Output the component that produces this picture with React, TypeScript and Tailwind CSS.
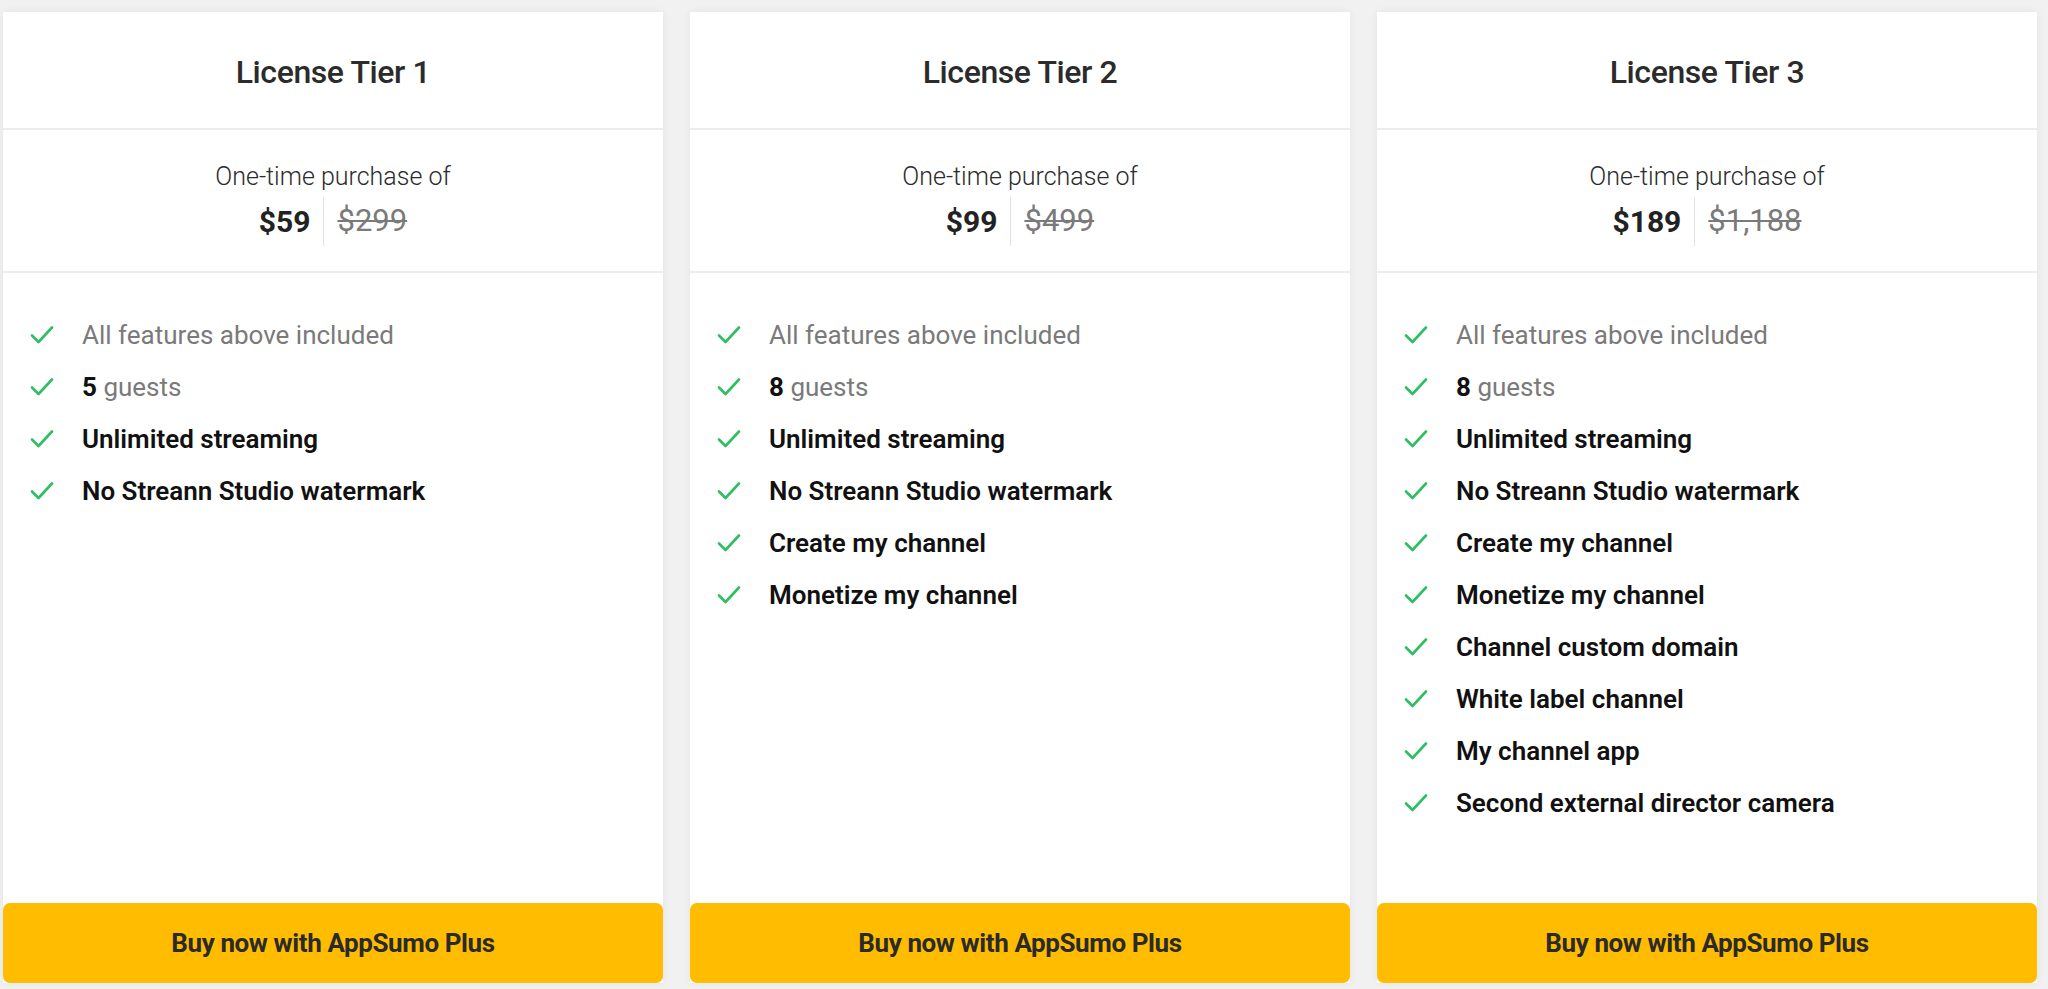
import React from 'react';

interface Feature {
  text: string;
  strong?: string;
  muted?: boolean;
}

interface Tier {
  name: string;
  price: string;
  oldPrice: string;
  features: Feature[];
}

const base: Feature[] = [
  { text: 'All features above included', muted: true },
];

const tiers: Tier[] = [
  {
    name: 'License Tier 1',
    price: '$59',
    oldPrice: '$299',
    features: [
      ...base,
      { strong: '5', text: 'guests', muted: true },
      { text: 'Unlimited streaming' },
      { text: 'No Streann Studio watermark' },
    ],
  },
  {
    name: 'License Tier 2',
    price: '$99',
    oldPrice: '$499',
    features: [
      ...base,
      { strong: '8', text: 'guests', muted: true },
      { text: 'Unlimited streaming' },
      { text: 'No Streann Studio watermark' },
      { text: 'Create my channel' },
      { text: 'Monetize my channel' },
    ],
  },
  {
    name: 'License Tier 3',
    price: '$189',
    oldPrice: '$1,188',
    features: [
      ...base,
      { strong: '8', text: 'guests', muted: true },
      { text: 'Unlimited streaming' },
      { text: 'No Streann Studio watermark' },
      { text: 'Create my channel' },
      { text: 'Monetize my channel' },
      { text: 'Channel custom domain' },
      { text: 'White label channel' },
      { text: 'My channel app' },
      { text: 'Second external director camera' },
    ],
  },
];

const Check: React.FC = () => (
  <svg width="24" height="20" viewBox="0 0 24 20" fill="none" className="shrink-0">
    <path d="M2 10.5 L8.5 17 L22 2.5" stroke="#2fbf63" strokeWidth="2.6" strokeLinecap="round" strokeLinejoin="round" />
  </svg>
);

const TierCard: React.FC<{ tier: Tier }> = ({ tier }) => {
  return (
    <div className="flex h-[971px] flex-col bg-white shadow-[0_0_8px_rgba(0,0,0,0.06)]">
      {/* Header */}
      <div className="flex h-[118px] items-center justify-center border-b-2 border-[#ececec] pt-[4px]">
        <h2 className="text-[32px] font-medium tracking-[-0.4px] text-[#2b2b2b]">{tier.name}</h2>
      </div>

      {/* Price */}
      <div className="flex h-[143px] flex-col items-center border-b-2 border-[#ececec] pt-[32px]">
        <p className="text-[25px] leading-[30px] font-light text-[#2b2b2b]">One-time purchase of</p>
        <div className="mt-[5px] flex h-[49px] items-center">
          <span className="pr-[13px] text-[30px] font-bold text-[#222]">{tier.price}</span>
          <span className="h-full border-l border-[#e2e2e2]" />
          <span className="pl-[13px] text-[31px] text-[#7a7a7a] line-through decoration-[2px]">{tier.oldPrice}</span>
        </div>
      </div>

      {/* Features */}
      <ul className="flex-1 pl-[27px] pt-[36px]">
        {tier.features.map((f, i) => (
          <li key={i} className="flex h-[52px] items-center gap-[28px]">
            <Check />
            <span className={`text-[26px] ${f.muted ? 'text-[#7a7a7a]' : 'font-semibold text-[#111]'}`}>
              {f.strong && <span className="font-bold text-[#111]">{f.strong} </span>}
              {f.text}
            </span>
          </li>
        ))}
      </ul>

      <button className="flex h-[80px] items-center justify-center rounded-[7px] bg-[#ffbc00] text-[26px] font-bold tracking-[-0.4px] text-[#2a2a2a]">
        Buy now with AppSumo Plus
      </button>
    </div>
  );
};

export default function App() {
  return (
    <div
      className="h-[989px] w-[2048px] overflow-hidden bg-[#f1f1f1] pl-[3px] pt-[12px]"
      style={{ fontFamily: 'Roboto, "Noto Sans", sans-serif' }}
    >
      <div className="grid grid-cols-[660px_660px_660px] gap-[27px]">
        {tiers.map((t) => (
          <TierCard key={t.name} tier={t} />
        ))}
      </div>
    </div>
  );
}
